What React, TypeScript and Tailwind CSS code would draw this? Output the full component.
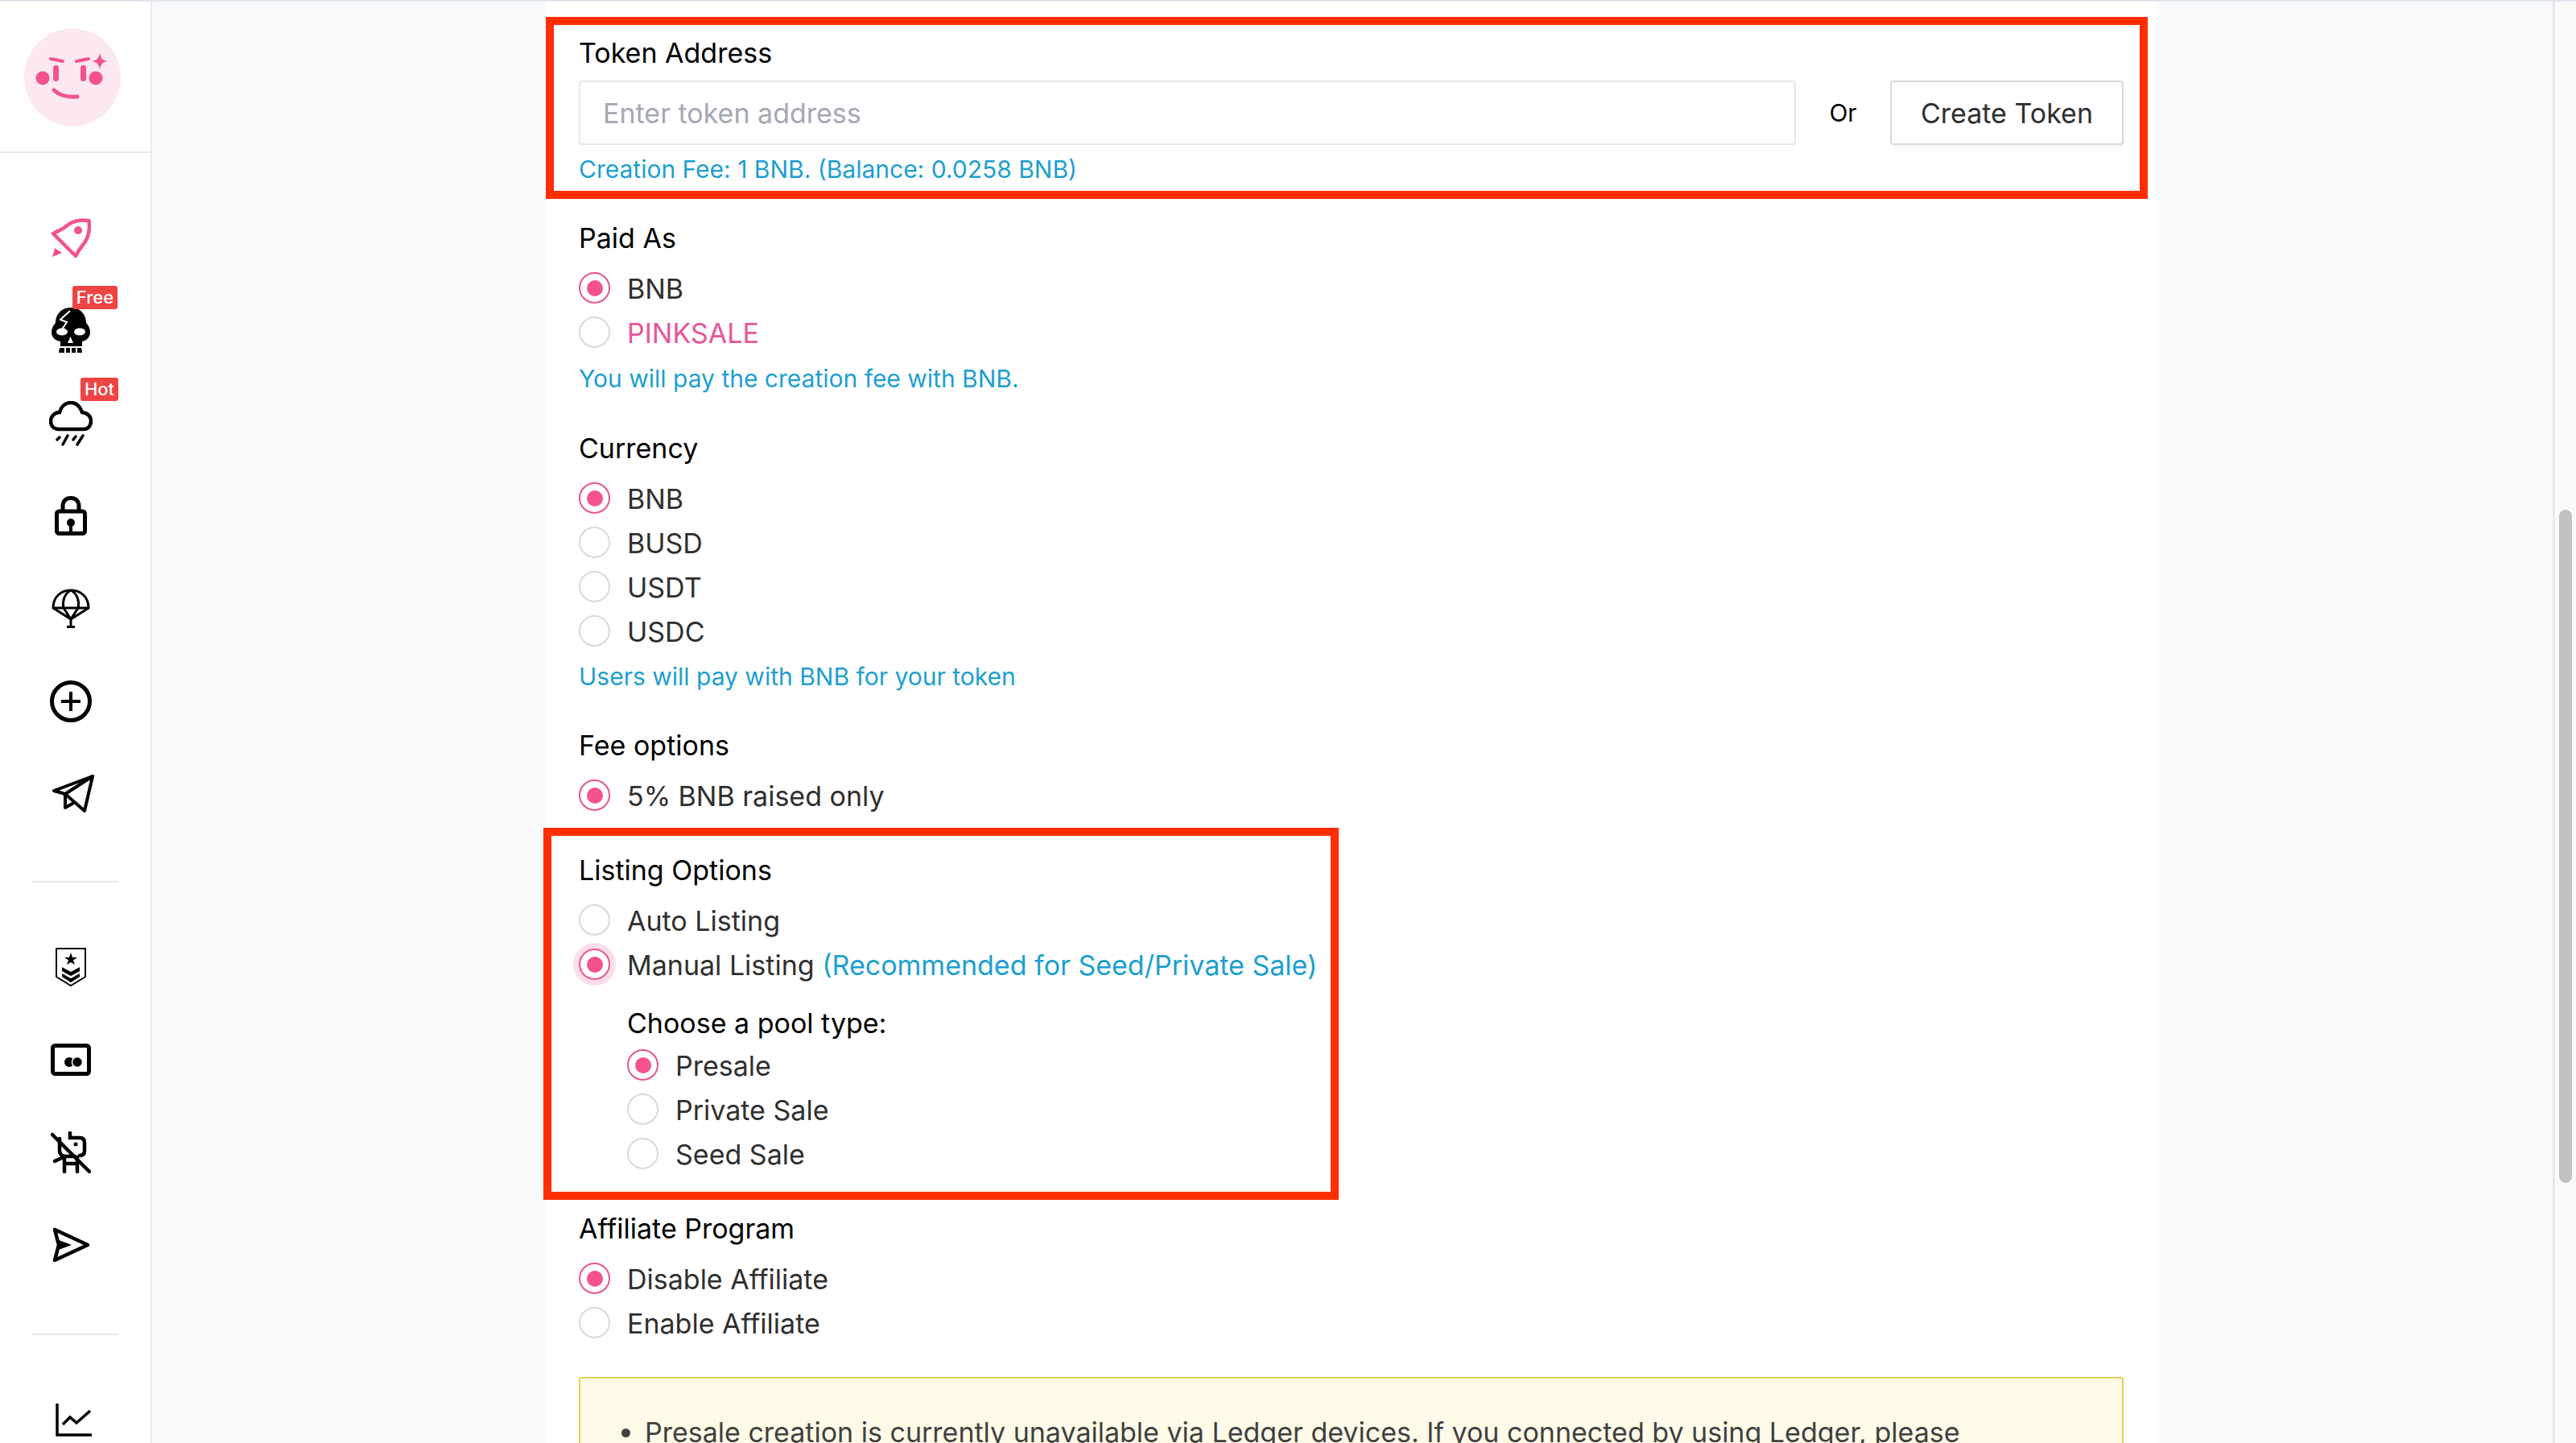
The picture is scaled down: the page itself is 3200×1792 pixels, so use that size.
import type { ReactNode } from 'react'

const PINK = '#f4528f'

function Logo() {
  return (
    <svg width="120" height="122" viewBox="0 0 120 122">
      <ellipse cx="60" cy="61" rx="60" ry="60.5" fill="#fbe8f0" />
      <circle cx="23" cy="62" r="8.5" fill={PINK} />
      <circle cx="89" cy="62" r="8.5" fill={PINK} />
      <rect x="36" y="46" width="7" height="20" rx="3.5" fill={PINK} />
      <rect x="70" y="46" width="7" height="20" rx="3.5" fill={PINK} />
      <path d="M33 38 L48 41 M65 41 L80 38" stroke={PINK} strokeWidth="4" strokeLinecap="round" />
      <path d="M37 77 C46 85 56 86 66 85" stroke={PINK} strokeWidth="5" strokeLinecap="round" fill="none" />
      <path d="M94 30 C95 37 97 40 104 41 C97 42 95 45 94 52 C93 45 91 42 84 41 C91 40 93 37 94 30Z" fill={PINK} />
    </svg>
  )
}

function RocketIcon() {
  return (
    <svg width="50" height="50" viewBox="0 0 50 50">
      <path d="M47.5 3 C38 1.5 27 3 19 10 C16 13 13 14 3 19 L31 47 C34 41 36 38 40 33 C47 25 49 13 47.5 3Z" fill="none" stroke={PINK} strokeWidth="4.5" strokeLinejoin="round" />
      <circle cx="34" cy="15" r="5" fill={PINK} />
      <path d="M5 37 L2 48 L14 43Z" fill={PINK} />
    </svg>
  )
}

function SkullIcon() {
  return (
    <svg width="48" height="56" viewBox="0 0 48 56">
      <path d="M24 0 C11 0 5 10 5 19 C1 23 0 28 0 31 C0 37 5 41 11 42 L11 48 H38 L38 42 C43 41 48 37 48 31 C48 28 47 23 43 19 C43 10 37 0 24 0Z" fill="#000" />
      <ellipse cx="13" cy="30" rx="7" ry="4.5" fill="#fff" />
      <ellipse cx="35" cy="30" rx="7" ry="4.5" fill="#fff" />
      <path d="M23.5 36 L27 44 H20Z" fill="#fff" />
      <path d="M23 4 L11 15 L19 18 L13 27" fill="none" stroke="#fff" strokeWidth="2" />
      <path d="M10 50 H16 V56 H9Z M18 50 H23 V56 H18Z M25 50 H30 V56 H25Z M32 50 H37 L38 56 H32Z" fill="#000" />
    </svg>
  )
}

function RainIcon() {
  return (
    <svg width="54" height="56" viewBox="0 0 54 56">
      <path d="M12 35 H43 C49 35 52 30 52 25 C52 18 47 15 41 14 C38 6 33 2 27 2 C20 2 15 7 13 14 C7 14 2 19 2 25 C2 31 6 35 12 35Z" fill="none" stroke="#000" strokeWidth="4.5" />
      <path d="M10 48 L13 45 M17 54 L23 43 M30 48 L33 44 M35 54 L42 43" stroke="#000" strokeWidth="3.5" strokeLinecap="round" />
    </svg>
  )
}

function LockIcon() {
  return (
    <svg width="40" height="49" viewBox="0 0 40 49">
      <rect x="2.5" y="19" width="35" height="27.5" rx="3" fill="none" stroke="#000" strokeWidth="5" />
      <path d="M10 19 V13 C10 6 14 2.5 20 2.5 C26 2.5 30 6 30 13 V19" fill="none" stroke="#000" strokeWidth="5" />
      <circle cx="20" cy="33" r="5" fill="#000" />
      <rect x="18" y="33" width="4" height="12" fill="#000" />
    </svg>
  )
}

function ParachuteIcon() {
  return (
    <svg width="48" height="49" viewBox="0 0 48 49" fill="none" stroke="#000" strokeWidth="3">
      <path d="M2 24 C2 10 12 2 24 2 C36 2 46 10 46 24Z" strokeLinejoin="round" />
      <path d="M24 2 C16 6 13 16 15 24 M24 2 C32 6 35 16 33 24" />
      <path d="M2 24 L24 38 L46 24 M15 24 L24 38 L33 24 M24 38 V47 M19 47.5 H29" />
    </svg>
  )
}

function PlusIcon() {
  return (
    <svg width="52" height="52" viewBox="0 0 52 52" fill="none" stroke="#000">
      <circle cx="26" cy="26" r="23.5" strokeWidth="5" />
      <path d="M14 26 H38 M26 14 V38" strokeWidth="4" />
    </svg>
  )
}

function PlaneIcon() {
  return (
    <svg width="52" height="47" viewBox="0 0 52 47" fill="none" stroke="#000" strokeWidth="4" strokeLinejoin="round" strokeLinecap="round">
      <path d="M50 2 L2 20 L16 24 L16 41 L25 36" />
      <path d="M50 2 L40 45 L16 24 Z" />
    </svg>
  )
}

function ShieldIcon() {
  return (
    <svg width="38" height="48" viewBox="0 0 38 48">
      <path d="M1 1 H37 V36 L19 47 L1 36Z" fill="none" stroke="#000" strokeWidth="2" />
      <path d="M19 6 L21 12 H27 L22 15.5 L24 21 L19 18 L14 21 L16 15.5 L11 12 H17Z" fill="#000" />
      <path d="M8 24 L19 30 L30 24 V29 L19 35 L8 29Z M8 32 L19 38 L30 32 V36 L19 43 L8 36Z" fill="#000" />
    </svg>
  )
}

function CardIcon() {
  return (
    <svg width="50" height="40" viewBox="0 0 50 40">
      <rect x="2.5" y="2.5" width="45" height="35" rx="3" fill="none" stroke="#000" strokeWidth="5" />
      <circle cx="23" cy="23" r="6" fill="#000" />
      <circle cx="33" cy="23" r="6.5" fill="#000" stroke="#fff" strokeWidth="1.5" />
    </svg>
  )
}

function RobotOffIcon() {
  return (
    <svg width="50" height="52" viewBox="0 0 50 52" fill="none" stroke="#000" strokeWidth="4.5" strokeLinecap="round">
      <path d="M24 2 V8 H36 C40 8 42 10 42 14 V24 C42 28 40 30 36 30" />
      <path d="M11 9 V24 C11 28 13 30 17 31 H30" />
      <path d="M5 37 L16 32 M17 32 V50 M33 32 V50 M17 40 H33" />
      <circle cx="31" cy="16" r="2.5" fill="#000" stroke="none" />
      <path d="M2 4 L48 50" />
    </svg>
  )
}

function ArrowIcon() {
  return (
    <svg width="47" height="44" viewBox="0 0 47 44">
      <path d="M3 3 L44 22 L3 41 L8 22Z" fill="none" stroke="#000" strokeWidth="4.5" strokeLinejoin="round" />
      <path d="M8 16 L24 22 L8 28Z" fill="#000" />
    </svg>
  )
}

function ChartIcon() {
  return (
    <svg width="45" height="41" viewBox="0 0 45 41" fill="none" stroke="#000" strokeWidth="3.5">
      <path d="M2 0 V39 H45" />
      <path d="M9 26 L18 17 L26 24 L43 9" />
    </svg>
  )
}

function Badge({ children, className }: { children: ReactNode; className: string }) {
  return (
    <span className={`absolute h-[29px] flex items-center justify-center rounded-[3px] bg-[#ef4444] text-white text-[22px] font-medium ${className}`}>
      {children}
    </span>
  )
}

function NavSlot({ children }: { children: ReactNode }) {
  return <div className="h-[115px] shrink-0 flex items-center justify-center pr-[11px]">{children}</div>
}

function Sidebar() {
  return (
    <aside className="w-[189px] shrink-0 bg-white border-r-2 border-[#e8eaef] flex flex-col">
      <div className="h-[188px] shrink-0 border-b-2 border-[#e5e7eb] flex items-start pl-[30px] pt-[33px]">
        <Logo />
      </div>
      <nav className="pt-[48px] flex flex-col">
        <NavSlot><RocketIcon /></NavSlot>
        <div className="relative">
          <NavSlot><div className="pb-[2px]"><SkullIcon /></div></NavSlot>
          <Badge className="left-[90px] top-[2px] w-[56px]">Free</Badge>
        </div>
        <div className="relative">
          <NavSlot><RainIcon /></NavSlot>
          <Badge className="left-[100px] top-[1px] w-[47px]">Hot</Badge>
        </div>
        <NavSlot><LockIcon /></NavSlot>
        <NavSlot><ParachuteIcon /></NavSlot>
        <NavSlot><PlusIcon /></NavSlot>
        <NavSlot><div className="pl-[6px]"><PlaneIcon /></div></NavSlot>
        <div className="mt-[51px] mb-[47px] mx-[40px] h-[2px] shrink-0 bg-[#e5e7eb]" />
        <NavSlot><ShieldIcon /></NavSlot>
        <NavSlot><CardIcon /></NavSlot>
        <NavSlot><RobotOffIcon /></NavSlot>
        <NavSlot><ArrowIcon /></NavSlot>
        <div className="mt-[53px] mb-[48px] mx-[40px] h-[2px] shrink-0 bg-[#e5e7eb]" />
        <NavSlot><div className="pl-[6px]"><ChartIcon /></div></NavSlot>
      </nav>
    </aside>
  )
}

function Label({ children, className = '' }: { children: ReactNode; className?: string }) {
  return <div className={`h-[40px] flex items-center text-[34px] text-black ${className}`}>{children}</div>
}

function Helper({ children, className = '' }: { children: ReactNode; className?: string }) {
  return <div className={`h-[40px] flex items-center text-[30px] text-[#1c9fd1] ${className}`}>{children}</div>
}

function Radio({ checked, halo, children }: { checked?: boolean; halo?: boolean; children: ReactNode }) {
  return (
    <div className="h-[55px] flex items-center gap-[21px] text-[34px] text-[#2f2f2f]">
      <span
        className={`w-[39px] h-[39px] shrink-0 rounded-full border-2 flex items-center justify-center ${
          checked ? 'border-[#e8548f]' : 'border-[#d9d9d9]'
        } ${halo ? 'ring-[7px] ring-[#fcdde9]' : ''}`}
      >
        {checked && <span className="w-[20px] h-[20px] rounded-full bg-[#f4528f]" />}
      </span>
      <span className="pt-[2px]">{children}</span>
    </div>
  )
}

function RedBox({ className }: { className: string }) {
  return <div className={`absolute border-[10px] border-[#ff2d00] pointer-events-none ${className}`} />
}

export default function App() {
  return (
    <div className="h-[1792px] w-[3200px] overflow-hidden border-t-2 border-[#e2e5ee] flex font-['Inter',sans-serif]">
      <Sidebar />

      <main className="flex-1 bg-[#f8fafb] overflow-hidden">
        <div className="ml-[489px] w-[2001px] h-full bg-white pl-[41px] pr-[41px] pt-[43px]">
          {/* token */}
          <section className="relative">
            <RedBox className="-left-[41px] -right-[30px] -top-[24px] -bottom-[17px]" />
            <Label>Token Address</Label>
            <div className="mt-[15px] flex items-center">
              <input
                placeholder="Enter token address"
                className="w-[1512px] h-[80px] px-[28px] border-2 border-[#e7e7e9] rounded-[4px] text-[34px] outline-none placeholder:text-[#a5a8b4]"
              />
              <span className="w-[117px] text-center text-[30px] text-black">Or</span>
              <button className="w-[290px] h-[80px] border-2 border-[#d9d9d9] rounded-[4px] bg-white text-[34px] text-[#2f2f2f] shadow-[0_4px_4px_rgba(0,0,0,0.03)]">
                Create Token
              </button>
            </div>
            <Helper className="mt-[10px]">Creation Fee: 1 BNB. (Balance: 0.0258 BNB)</Helper>
          </section>

          <Label className="mt-[45px]">Paid As</Label>
          <div className="mt-[15px]">
            <Radio checked>BNB</Radio>
            <Radio><span className="text-[#e7559a]">PINKSALE</span></Radio>
          </div>
          <Helper className="mt-[10px]">You will pay the creation fee with BNB.</Helper>

          <Label className="mt-[46px]">Currency</Label>
          <div className="mt-[15px]">
            <Radio checked>BNB</Radio>
            <Radio>BUSD</Radio>
            <Radio>USDT</Radio>
            <Radio>USDC</Radio>
          </div>
          <Helper className="mt-[9px]">Users will pay with BNB for your token</Helper>

          <Label className="mt-[45px]">Fee options</Label>
          <div className="mt-[15px]">
            <Radio checked>5% BNB raised only</Radio>
          </div>

          {/* listing */}
          <section className="relative mt-[45px]">
            <RedBox className="-left-[44px] w-[988px] -top-[32px] -bottom-[30px]" />
            <Label>Listing Options</Label>
            <div className="mt-[15px]">
              <Radio>Auto Listing</Radio>
              <Radio checked halo>
                Manual Listing <span className="text-[#1c9fd1]">(Recommended for Seed/Private Sale)</span>
              </Radio>
            </div>
            <div className="pl-[60px]">
              <Label className="mt-[25px]">Choose a pool type:</Label>
              <div className="mt-[5px]">
                <Radio checked>Presale</Radio>
                <Radio>Private Sale</Radio>
                <Radio>Seed Sale</Radio>
              </div>
            </div>
          </section>

          <Label className="mt-[45px]">Affiliate Program</Label>
          <div className="mt-[15px]">
            <Radio checked>Disable Affiliate</Radio>
            <Radio>Enable Affiliate</Radio>
          </div>

          <div className="mt-[40px] w-[1919px] h-[200px] border-2 border-[#e8d04e] rounded-[4px] bg-[#fffbe8] pt-[41px] pl-[50px] pr-[40px] text-[34px] text-[#3f3f3f]">
            <ul className="list-disc pl-[30px]">
              <li>Presale creation is currently unavailable via Ledger devices. If you connected by using Ledger, please</li>
            </ul>
          </div>
        </div>
      </main>

      <div className="w-[29px] shrink-0 bg-[#fafafa] border-l-[3px] border-[#e8e8e8] pl-[5px] pt-[631px]">
        <div className="w-[16px] h-[836px] rounded-full bg-[#c1c1c1]" />
      </div>
    </div>
  )
}
